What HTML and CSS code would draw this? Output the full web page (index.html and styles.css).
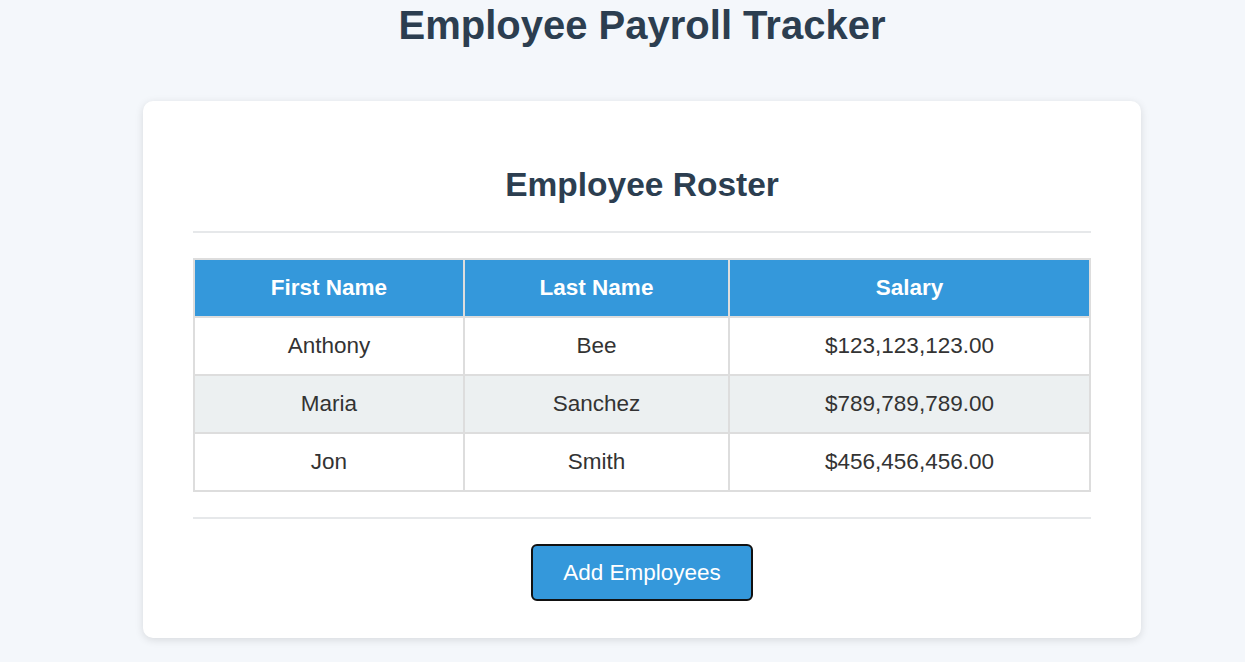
FILE: index.html
```html
<!DOCTYPE html>
<html lang="en">
<head>
<meta charset="UTF-8">
<title>Employee Payroll Tracker</title>
<link rel="stylesheet" href="styles.css">
</head>
<body>
<div class="page">
  <h1 class="title">Employee Payroll Tracker</h1>
  <main class="card">
    <h2 class="card-title">Employee Roster</h2>
    <hr class="rule">
    <table class="roster">
      <colgroup>
        <col class="col-first">
        <col class="col-last">
        <col class="col-salary">
      </colgroup>
      <thead>
        <tr><th>First Name</th><th>Last Name</th><th>Salary</th></tr>
      </thead>
      <tbody>
        <tr><td>Anthony</td><td>Bee</td><td>$123,123,123.00</td></tr>
        <tr><td>Maria</td><td>Sanchez</td><td>$789,789,789.00</td></tr>
        <tr><td>Jon</td><td>Smith</td><td>$456,456,456.00</td></tr>
      </tbody>
    </table>
    <hr class="rule rule-bottom">
    <div class="actions">
      <button class="btn" type="button">Add Employees</button>
    </div>
  </main>
</div>
</body>
</html>
```

FILE: styles.css
```css
html, body {
  margin: 0;
  padding: 0;
}
body {
  background: #f4f7fb;
  font-family: "Liberation Sans", Arial, sans-serif;
  color: #2c3e50;
}
.page {
  padding-left: 39px;
  padding-bottom: 24px;
}
.title {
  margin: 2px 0 0;
  text-align: center;
  font-size: 40px;
  line-height: 46px;
  font-weight: bold;
  color: #2c3e50;
}
.card {
  box-sizing: border-box;
  width: 998px;
  margin: 53px auto 0;
  background: #fff;
  border-radius: 10px;
  box-shadow: 0 2px 8px rgba(0, 0, 0, 0.12);
  padding: 65px 50px 37px;
}
.card-title {
  margin: 0;
  text-align: center;
  font-size: 33.5px;
  line-height: 38px;
  font-weight: bold;
  color: #2c3e50;
}
.rule {
  border: none;
  height: 2px;
  background: #e6e8ea;
  margin: 27px 0 25px;
}
.rule-bottom {
  margin: 25px 0 25px;
}
.roster {
  width: 100%;
  border-collapse: collapse;
  table-layout: fixed;
  border: 2px solid #dddddd;
  font-size: 22.5px;
  line-height: 24px;
}
.col-first { width: 270px; }
.col-last { width: 265px; }
.roster th,
.roster td {
  border: 2px solid #dddddd;
  padding: 16px 10px;
  text-align: center;
}
.roster th {
  background: #3498db;
  color: #fff;
  font-weight: bold;
}
.roster td {
  color: #333;
}
.roster tbody tr:nth-child(2) td {
  background: #ecf0f1;
}
.actions {
  display: flex;
  justify-content: center;
}
.btn {
  font-family: "Liberation Sans", Arial, sans-serif;
  font-size: 22.5px;
  line-height: 25px;
  padding: 14px 30px;
  background: #3498db;
  color: #fff;
  border: 2px solid #111;
  border-radius: 6px;
  cursor: pointer;
}
```
